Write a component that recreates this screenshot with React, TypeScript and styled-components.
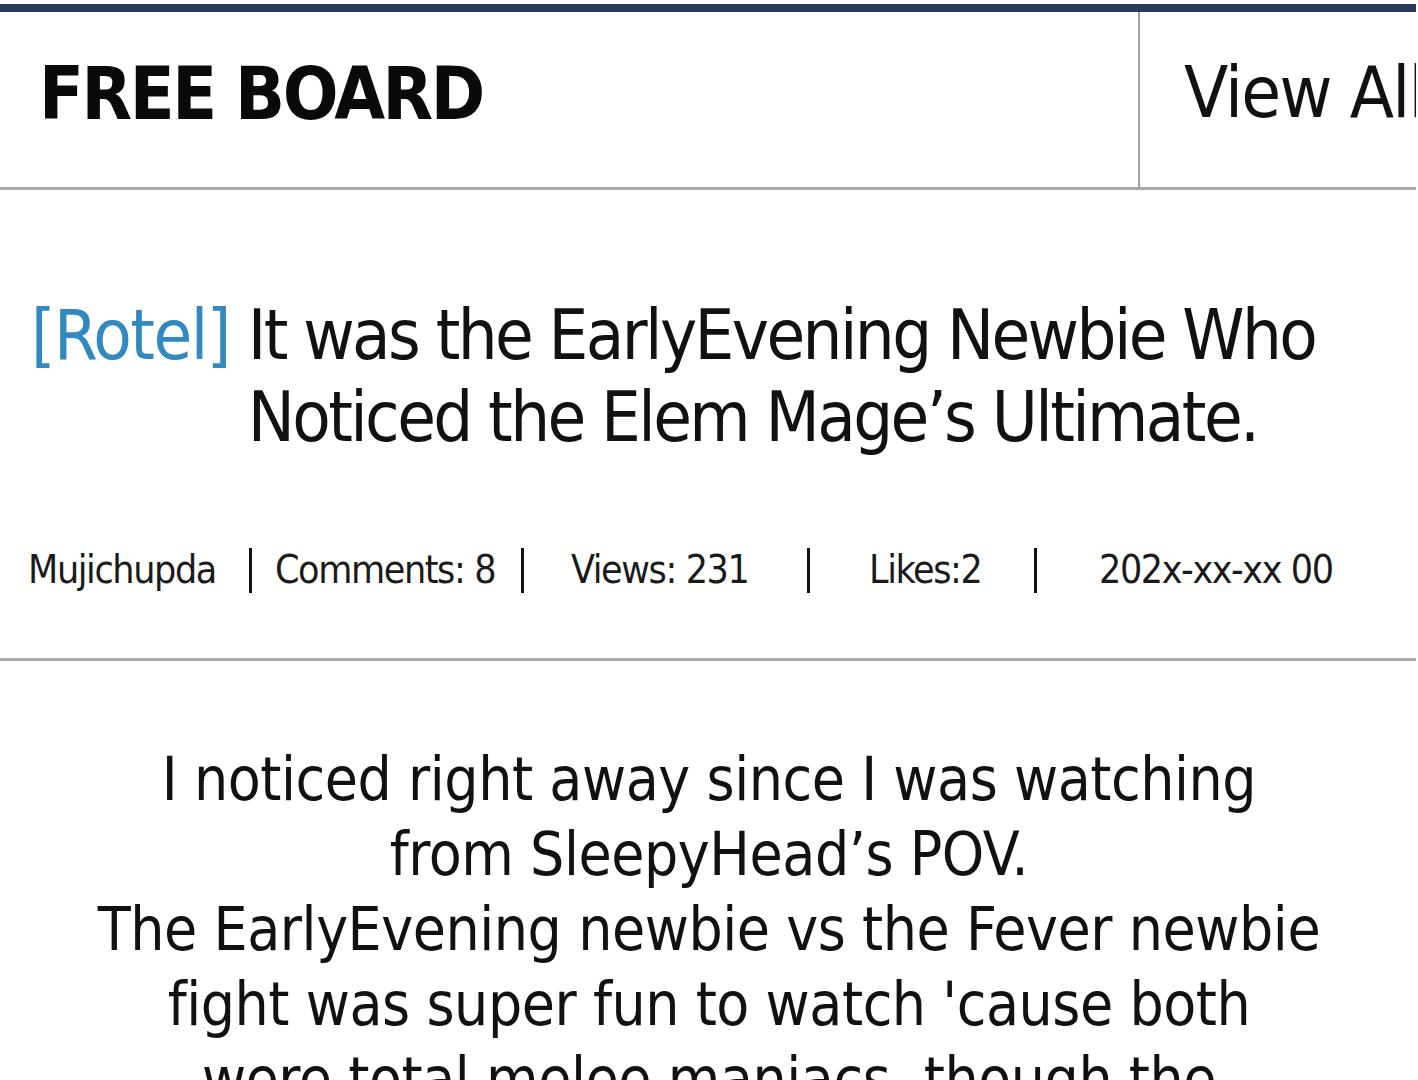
import React from "react";
import styled, { createGlobalStyle } from "styled-components";

const Global = createGlobalStyle`
  html, body {
    margin: 0;
    padding: 0;
    background: #ffffff;
  }
  body {
    font-family: "DejaVu Sans Condensed", "DejaVu Sans", "Liberation Sans", sans-serif;
    font-stretch: condensed;
    color: #111111;
    overflow: hidden;
  }
`;

const Page = styled.div`
  width: 1418px;
  padding-top: 4px;
`;

const Header = styled.header`
  display: flex;
  height: 175px;
  border-top: 8px solid #2c3a58;
  border-bottom: 3px solid #a8a8a8;
  width: 1416px;
`;

const BoardName = styled.h1`
  flex: 1;
  margin: 0;
  padding: 0 0 13px 39px;
  display: flex;
  align-items: center;
  font-weight: 700;
  font-size: 73px;
  letter-spacing: -2.4px;
  color: #0a0a0a;
`;

const ViewAll = styled.a`
  width: 232px;
  border-left: 2px solid #a0a0a0;
  padding: 0 0 16px 44px;
  display: flex;
  align-items: center;
  font-size: 72px;
  letter-spacing: -1.7px;
  color: #111;
  white-space: nowrap;
  overflow: hidden;
  text-decoration: none;
`;

const Post = styled.article`
  padding: 104px 0 39px 31px;
`;

const TitleRow = styled.div`
  display: flex;
  align-items: flex-start;
  gap: 18px;
  font-size: 70px;
  line-height: 82px;
  letter-spacing: -2.6px;
`;

const Tag = styled.span`
  color: #3189c0;
  white-space: nowrap;
  letter-spacing: -1.5px;
`;

const TitleText = styled.h2`
  margin: 0;
  font-size: inherit;
  font-weight: 400;
  width: 1100px;
  color: #111;
`;

const Meta = styled.div`
  display: flex;
  align-items: center;
  margin-top: 61px;
  height: 100px;
  margin-left: -3px;
  font-size: 39px;
  letter-spacing: -1.4px;
  color: #1a1a1a;
`;

const MetaItem = styled.span<{ $w: number }>`
  width: ${(p) => p.$w}px;
  white-space: nowrap;
`;

const Bar = styled.span<{ $before: number; $after: number }>`
  display: inline-block;
  width: 3px;
  height: 45px;
  background: #111;
  margin: 2px ${(p) => p.$after}px 0 ${(p) => p.$before}px;
`;

const Rule = styled.hr`
  margin: 0;
  border: none;
  border-top: 3px solid #a8a8a8;
  width: 1416px;
`;

const Body = styled.div`
  padding-top: 81px;
  text-align: center;
  font-size: 60px;
  line-height: 75px;
  letter-spacing: -0.45px;
  color: #111;
`;

const BodyLine = styled.p`
  margin: 0;
  white-space: nowrap;
`;

// width of each field and the gaps around the bar that follows it
const meta = [
  { text: "Mujichupda", w: 188, before: 33, after: 23 },
  { text: "Comments: 8", w: 219, before: 27, after: 47 },
  { text: "Views: 231", w: 178, before: 58, after: 59 },
  { text: "Likes:2", w: 115, before: 50, after: 62 },
  { text: "202x-xx-xx 00", w: 240, before: 0, after: 0 },
];

const bodyLines = [
  "I noticed right away since I was watching",
  "from SleepyHead’s POV.",
  "The EarlyEvening newbie vs the Fever newbie",
  "fight was super fun to watch 'cause both",
  "were total melee maniacs, though the",
];

export default function App() {
  return (
    <Page>
      <Global />
      <Header>
        <BoardName>FREE BOARD</BoardName>
        <ViewAll href="#">View All</ViewAll>
      </Header>
      <Post>
        <TitleRow>
          <Tag>[Rotel]</Tag>
          <TitleText>It was the EarlyEvening Newbie Who Noticed the Elem Mage’s Ultimate.</TitleText>
        </TitleRow>
        <Meta>
          {meta.map((m, i) => (
            <React.Fragment key={m.text}>
              <MetaItem $w={m.w}>{m.text}</MetaItem>
              {i < meta.length - 1 && <Bar $before={m.before} $after={m.after} />}
            </React.Fragment>
          ))}
        </Meta>
      </Post>
      <Rule />
      <Body>
        {bodyLines.map((l) => (
          <BodyLine key={l}>{l}</BodyLine>
        ))}
      </Body>
    </Page>
  );
}
